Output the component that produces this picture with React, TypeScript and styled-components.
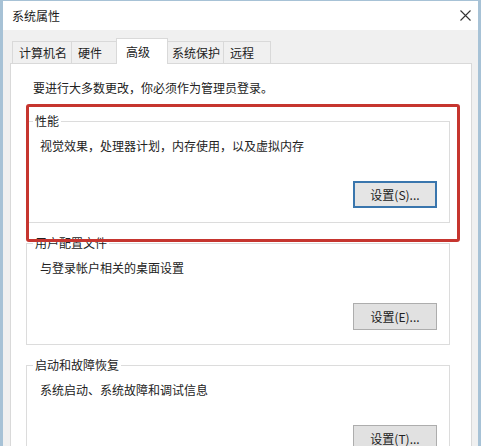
import styled, { createGlobalStyle } from "styled-components";

const GlobalStyle = createGlobalStyle`
  html, body {
    margin: 0;
    padding: 0;
    background: #ffffff;
  }
  body {
    font-family: "Noto Sans CJK SC", "Noto Sans", sans-serif;
    font-size: 12px;
    color: #222;
  }
`;

const Window = styled.div`
  width: 481px;
  height: 446px;
  box-sizing: border-box;
  border-top: 1px solid #a7c2d6;
  border-left: 3px solid #a7c2d6;
  border-right: 3px solid #a7c2d6;
  display: flex;
  flex-direction: column;
  overflow: hidden;
  background: #f0f0f0;
`;

const TitleBar = styled.div`
  height: 29px;
  flex: none;
  background: #ffffff;
  display: flex;
  align-items: center;
  justify-content: space-between;
  padding-left: 9px;
`;

const Title = styled.span`
  font-size: 12px;
  line-height: 16px;
  color: #1a1a1a;
`;

const CloseButton = styled.div`
  width: 26px;
  height: 29px;
  display: flex;
  align-items: center;
  justify-content: center;
`;

const Body = styled.div`
  flex: 1;
  display: flex;
  flex-direction: column;
  padding-top: 8px;
  min-height: 0;
`;

const TabList = styled.div`
  display: flex;
  align-items: flex-end;
  margin-left: 9px;
  position: relative;
  z-index: 1;
`;

const Tab = styled.div<{ $w: number; $active?: boolean }>`
  box-sizing: border-box;
  width: ${(p) => p.$w}px;
  height: ${(p) => (p.$active ? 26 : 23)}px;
  margin-left: ${(p) => (p.$active ? -2 : 0)}px;
  margin-right: ${(p) => (p.$active ? -2 : 0)}px;
  border: 1px solid #d9d9d9;
  border-bottom: ${(p) => (p.$active ? "none" : "1px solid #d9d9d9")};
  border-left: ${(p) => (p.$active ? "1px solid #d9d9d9" : "none")};
  background: ${(p) => (p.$active ? "#ffffff" : "#f0f0f0")};
  padding-left: ${(p) => (p.$active ? 9 : 6)}px;
  display: flex;
  align-items: center;
  line-height: 16px;
  color: #222;
  position: relative;
  z-index: ${(p) => (p.$active ? 2 : 1)};
  &:first-child {
    border-left: 1px solid #d9d9d9;
  }
`;

const Panel = styled.div`
  position: relative;
  flex: 1;
  margin: -1px 6px 0 7px;
  background: #ffffff;
  border: 1px solid #d9d9d9;
  border-bottom: none;
  padding: 16px 21px 0 15px;
  overflow: hidden;
`;

const Note = styled.div`
  margin-left: 7px;
  line-height: 16px;
  color: #222;
`;

const Group = styled.fieldset<{ $gap: number }>`
  margin: ${(p) => p.$gap}px 0 0 0;
  padding: 0 12px 14px 13px;
  border: 1px solid #dcdcdc;
  min-width: 0;
`;

const Legend = styled.legend`
  margin-left: -7px;
  padding: 0 2px;
  line-height: 16px;
  color: #222;
`;

const Desc = styled.div`
  margin-top: 9px;
  line-height: 16px;
  color: #222;
`;

const ButtonRow = styled.div`
  display: flex;
  justify-content: flex-end;
  margin-top: 27px;
`;

const Button = styled.button<{ $focused?: boolean }>`
  box-sizing: border-box;
  width: 84px;
  height: 27px;
  margin: 0;
  padding: 0;
  font-family: inherit;
  font-size: 12px;
  color: #222;
  background: ${(p) => (p.$focused ? "#e5e5e5" : "#e1e1e1")};
  border: ${(p) => (p.$focused ? "2px solid #3a76ad" : "1px solid #adadad")};
`;

const Highlight = styled.div`
  position: absolute;
  left: 15px;
  top: 40px;
  width: 434px;
  height: 138px;
  box-sizing: border-box;
  border: 3px solid #c6352f;
  border-radius: 3px;
  pointer-events: none;
`;

const tabs = [
  { label: "计算机名", w: 60 },
  { label: "硬件", w: 46 },
  { label: "高级", w: 52, active: true },
  { label: "系统保护", w: 58 },
  { label: "远程", w: 47 },
];

const groups = [
  { title: "性能", desc: "视觉效果，处理器计划，内存使用，以及虚拟内存", btn: "设置(S)...", focused: true, gap: 17 },
  { title: "用户配置文件", desc: "与登录帐户相关的桌面设置", btn: "设置(E)...", gap: 12 },
  { title: "启动和故障恢复", desc: "系统启动、系统故障和调试信息", btn: "设置(T)...", gap: 12 },
];

export default function App() {
  return (
    <>
      <GlobalStyle />
      <Window>
        <TitleBar>
          <Title>系统属性</Title>
          <CloseButton>
            <svg width="11" height="11" viewBox="0 0 11 11">
              <path d="M0.5 0.5 L10.5 10.5 M10.5 0.5 L0.5 10.5" stroke="#333" strokeWidth="1.1" fill="none" />
            </svg>
          </CloseButton>
        </TitleBar>
        <Body>
          <TabList>
            {tabs.map((t) => (
              <Tab key={t.label} $w={t.w} $active={t.active}>
                {t.label}
              </Tab>
            ))}
          </TabList>
          <Panel>
            <Note>要进行大多数更改，你必须作为管理员登录。</Note>
            {groups.map((g) => (
              <Group key={g.title} $gap={g.gap}>
                <Legend>{g.title}</Legend>
                <Desc>{g.desc}</Desc>
                <ButtonRow>
                  <Button $focused={g.focused}>{g.btn}</Button>
                </ButtonRow>
              </Group>
            ))}
            <Highlight />
          </Panel>
        </Body>
      </Window>
    </>
  );
}
